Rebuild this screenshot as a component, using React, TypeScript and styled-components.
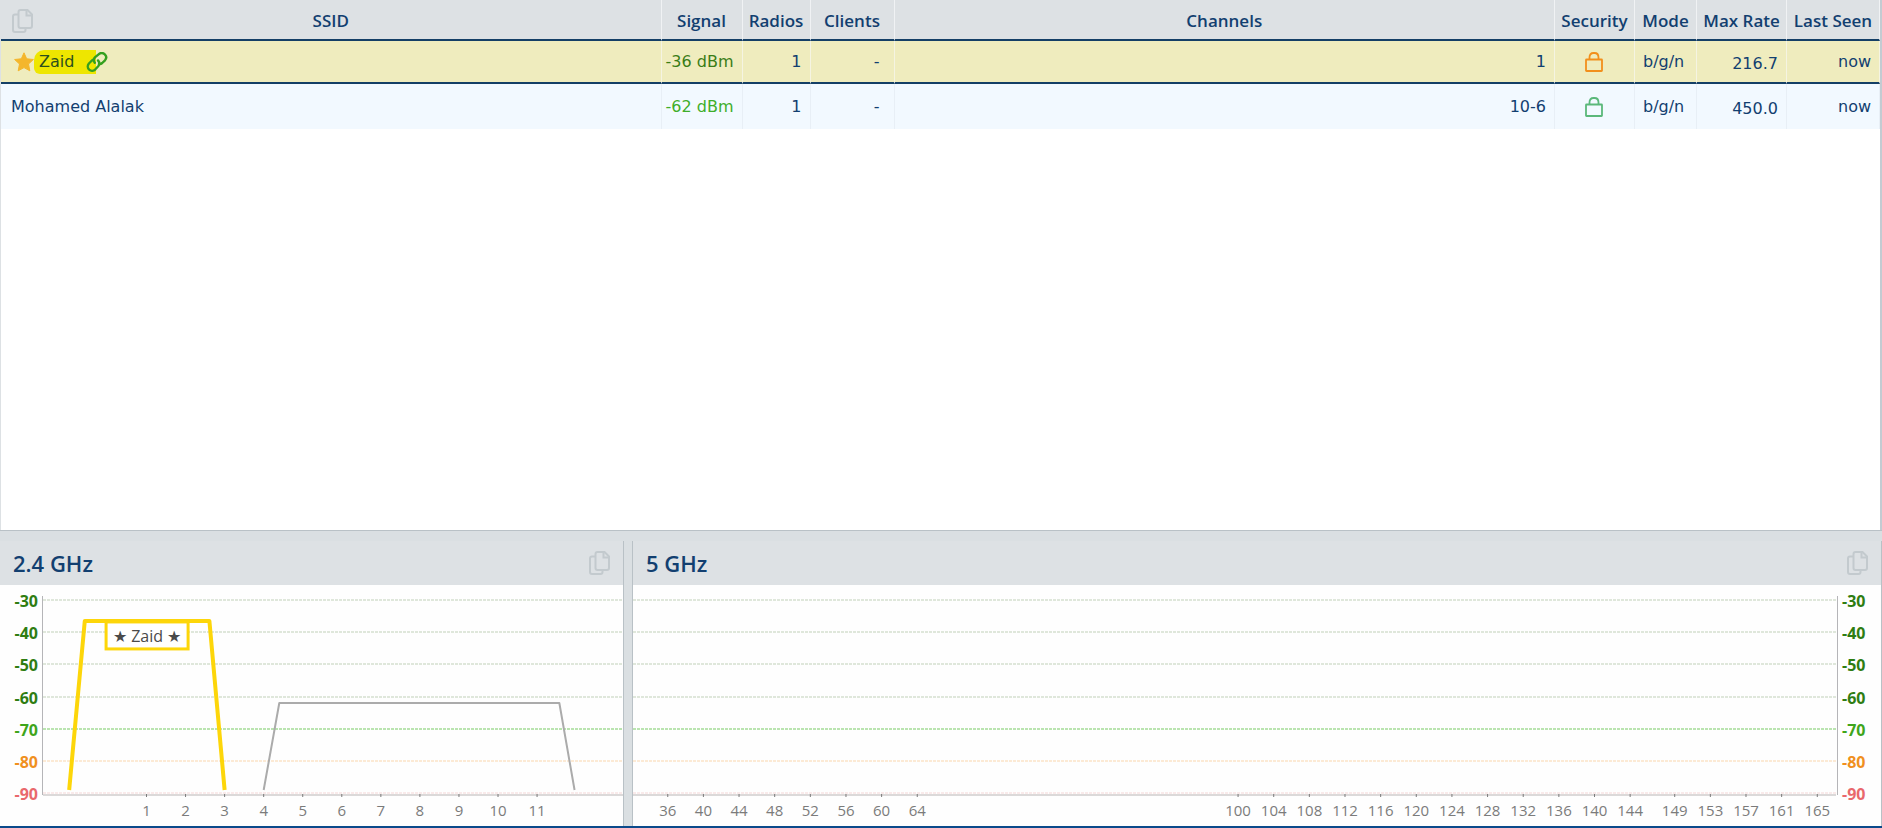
import React, { useLayoutEffect, useRef, useState } from 'react';
import styled, { createGlobalStyle } from 'styled-components';

const colors = {
  navy: '#123f70',
  bar: '#dde1e4',
  edge: '#b9c1c6',
  icon: '#c3cace',
  strong: '#2f7d12',
  good: '#3fa51b',
  fair: '#f0901e',
  weak: '#e9686c',
  axis: '#cfcccd',
  tick: '#7b7b7b',
};

const uiFont = '"Open Sans", "Noto Sans", sans-serif';
const cellFont = '"DejaVu Sans", sans-serif';

const GlobalStyle = createGlobalStyle`
  *, *::before, *::after { box-sizing: border-box; }
  body { margin: 0; background: #fff; color: ${colors.navy}; font-family: ${uiFont}; }
`;

const Page = styled.div`
  display: flex;
  flex-direction: column;
  min-height: 100vh;
  border-bottom: 2px solid #0b4a8b;
`;

const NetworkPanel = styled.section`
  flex: 1;
  border-left: 1px solid ${colors.bar};
  border-right: 2px solid #c3cbd2;
`;

const NetworkTable = styled.table`
  width: 100%;
  table-layout: fixed;
  border-collapse: separate;
  border-spacing: 0;
`;

const Col = styled.col<{ $width?: number }>`
  width: ${(p) => (p.$width ? `${p.$width}px` : 'auto')};
`;

const HeadRow = styled.tr`
  height: 41px;
  background: ${colors.bar};
`;

const HeadCell = styled.th`
  padding: 2px 0 0;
  border-right: 1px solid #f0f2f4;
  border-bottom: 2px solid #143f66;
  font-size: 17px;
  line-height: 22px;
  font-weight: 600;
  white-space: nowrap;
`;

const SsidHead = styled.div`
  display: grid;
  grid-template-columns: 32px 1fr 32px;
  align-items: center;
  & > button { justify-self: end; }
`;

const NetworkRow = styled.tr<{ $selected?: boolean }>`
  height: ${(p) => (p.$selected ? 43 : 45)}px;
  background: ${(p) => (p.$selected ? '#efecbe' : '#f2f9ff')};
  & > td {
    border-right: 1px solid ${(p) => (p.$selected ? '#f5f4e2' : '#e8eff6')};
    border-bottom: ${(p) => (p.$selected ? '2px solid #143f66' : '0')};
  }
`;

const Cell = styled.td<{ $align?: string; $tone?: string }>`
  padding: 0 8px 0 10px;
  font-family: ${cellFont};
  font-size: 16px;
  line-height: 20px;
  white-space: nowrap;
  text-align: ${(p) => p.$align ?? 'right'};
  color: ${(p) => p.$tone ?? 'inherit'};
`;

const SignalCell = styled(Cell)`
  padding: 0 4px 0 0;
`;

const ClientsCell = styled(Cell)`
  padding-right: 14px;
`;

const ModeCell = styled(Cell)`
  padding-left: 8px;
`;

const RateCell = styled(Cell)`
  padding-top: 4px;
`;

const IconCell = styled(Cell)`
  padding: 0 2px 0 0;
  & > svg { display: block; margin: 0 auto; }
`;

const Favourite = styled.div`
  display: flex;
  align-items: center;
  padding-left: 3px;
  color: #2c4f1e;
`;

const Marker = styled.span`
  display: flex;
  align-items: center;
  gap: 12px;
  height: 24px;
  padding-left: 5px;
  background: linear-gradient(#eee600, #eee600) left / 62px 100% no-repeat;
  border-radius: 10px 0 0 6px;
`;

const IconButton = styled.button`
  display: flex;
  padding: 0;
  border: 0;
  background: none;
  color: ${colors.icon};
  cursor: pointer;
`;

const HSplitter = styled.div`
  height: 11px;
  background: #dadfe2;
  border-top: 1px solid ${colors.edge};
`;

const Bands = styled.div`
  display: grid;
  grid-template-columns: 33.1% 10px minmax(0, 1fr);
`;

const VSplitter = styled.div`
  background: #dadfe2;
  border: solid ${colors.edge};
  border-width: 0 1px;
`;

const BandPanel = styled.section<{ $edge?: boolean }>`
  border-right: ${(p) => (p.$edge ? `1px solid ${colors.edge}` : '0')};
`;

const BandHeader = styled.header`
  display: flex;
  align-items: center;
  justify-content: space-between;
  height: 44px;
  padding: 0 13px;
  background: ${colors.bar};
`;

const BandTitle = styled.h2`
  margin: 0;
  font-size: 22px;
  line-height: 28px;
  font-weight: 600;
`;

const ChartSvg = styled.svg`
  display: block;
  width: 100%;
  height: 241px;
  background: #fefefe;
  font-family: ${uiFont};
`;

const LevelText = styled.text`
  font-size: 16px;
  font-weight: 700;
`;

const ChannelText = styled.text`
  font-size: 15px;
  fill: ${colors.tick};
  text-anchor: middle;
`;

const TagText = styled.text`
  font-size: 16px;
  fill: #4a4a4a;
  text-anchor: middle;
`;

const CopyIcon = () => (
  <svg width="21" height="24" viewBox="0 0 21 24" fill="none" stroke="currentColor" strokeWidth="2" aria-hidden="true">
    <path d="M6 5.500H3Q1 5.500 1 7.500V21Q1 23 3 23H11.500Q13.500 23 13.500 21V19" />
    <path d="M8.500 1H15.500L20 5.500V17Q20 19 18 19H8.500Q6.500 19 6.500 17V3Q6.500 1 8.500 1Z" />
    <path d="M14.500 1V6.500H20" />
  </svg>
);

const StarIcon = () => (
  <svg width="20" height="20" viewBox="0 0 20 20" fill="#f4b62c" stroke="#f4b62c" strokeWidth="1" strokeLinejoin="round" aria-hidden="true">
    <path d="M10 .8 12.700 6.800 19.400 7.500 14.500 12 15.800 18.800 10 15.600 4.200 18.800 5.500 12 .6 7.500 7.300 6.800Z" />
  </svg>
);

const LinkIcon = () => (
  <svg width="22" height="20" viewBox="0 0 22 20" fill="none" stroke="#34a01f" strokeWidth="2.400" strokeLinecap="round" strokeLinejoin="round" aria-hidden="true">
    <path d="M8.800 10.800C7.200 8.600 7.600 6.800 9.200 5.200L12.600 2.300C14.400.8 17 .8 18.800 2.300C20.500 4 20.500 6.500 19 8.300L16.200 11C15.200 11.900 14 12.200 13 12" />
    <path d="M12 8.400C13.900 10.600 13.700 12.600 12.200 14.300L9.400 17.300C7.600 19.100 5 19.300 3.200 17.700C1.400 16 1.300 13.400 2.900 11.500L5.400 9C6.200 8.200 7 7.900 7.600 7.800" />
  </svg>
);

const LockIcon = ({ color }: { color: string }) => (
  <svg width="18" height="20" viewBox="0 0 18 20" fill="none" stroke={color} strokeWidth="1.800" role="img" aria-label="Secured">
    <rect x="1" y="7.500" width="16" height="11.500" rx=".5" />
    <path d="M4.500 7.500V5.500Q4.500 1 8.500 1H9.500Q13.500 1 13.500 5.500V7.500" />
  </svg>
);

const CopyButton = ({ label }: { label: string }) => (
  <IconButton type="button" aria-label={label}>
    <CopyIcon />
  </IconButton>
);

const networks = [
  { ssid: 'Zaid', selected: true, signal: '-36 dBm', tone: '#3a7d16', channels: '1', lock: '#f28f1c', rate: '216.7' },
  { ssid: 'Mohamed Alalak', selected: false, signal: '-62 dBm', tone: '#3fae2a', channels: '10-6', lock: '#5bb87a', rate: '450.0' },
];

const levels = [
  { value: -30, color: colors.strong, line: '#d5dfcf' },
  { value: -40, color: colors.strong, line: '#d5dfcf' },
  { value: -50, color: colors.strong, line: '#d5dfcf' },
  { value: -60, color: colors.strong, line: '#d5dfcf' },
  { value: -70, color: colors.good, line: '#a4dc97' },
  { value: -80, color: colors.fair, line: '#fbe3c8' },
  { value: -90, color: colors.weak, line: '#f8e4e4' },
];

interface Trace {
  points: [number, number][];
  color: string;
  width: number;
  tag?: string;
}

interface BandChartProps {
  label: string;
  domain: [number, number];
  channels: number[];
  traces?: Trace[];
  axisSide: 'left' | 'right';
}

const yOf = (dbm: number) => 15 + (-30 - dbm) * 3.22;

function BandChart({ label, domain, channels, traces = [], axisSide }: BandChartProps) {
  const ref = useRef<SVGSVGElement>(null);
  const [width, setWidth] = useState(600);

  useLayoutEffect(() => {
    const node = ref.current;
    if (!node) return;
    const measure = () => setWidth(Math.round(node.getBoundingClientRect().width));
    measure();
    const observer = new ResizeObserver(measure);
    observer.observe(node);
    return () => observer.disconnect();
  }, []);

  const onLeft = axisSide === 'left';
  const start = onLeft ? 43 : 0;
  const end = onLeft ? width : width - 45;
  const axisX = onLeft ? 42 : width - 44;
  const xOf = (channel: number) => start + ((channel - domain[0]) / (domain[1] - domain[0])) * (end - start);

  return (
    <ChartSvg ref={ref} role="img" aria-label={label}>
      {levels.map((level) => {
        const y = Math.round(yOf(level.value));
        return (
          <g key={level.value}>
            <line x1={start} x2={end} y1={y} y2={y} stroke={level.line} strokeWidth="1.500" strokeDasharray="3 1" />
            <LevelText x={onLeft ? 38 : width - 39} y={y + 7} textAnchor={onLeft ? 'end' : 'start'} fill={level.color}>
              {level.value}
            </LevelText>
          </g>
        );
      })}
      <line x1={axisX + 0.5} x2={axisX + 0.5} y1="11" y2="210" stroke="#b5b5b8" />
      <line x1={start} x2={end} y1="210" y2="210" stroke={colors.axis} strokeWidth="1.500" />
      {channels.map((channel) => (
        <g key={channel}>
          <line x1={xOf(channel)} x2={xOf(channel)} y1="209" y2="212" stroke={colors.tick} />
          <ChannelText x={xOf(channel)} y="231">{channel}</ChannelText>
        </g>
      ))}
      {traces.map((trace) => {
        const middle = (xOf(trace.points[1][0]) + xOf(trace.points[2][0])) / 2;
        const top = yOf(trace.points[1][1]);
        return (
          <g key={trace.color}>
            <polyline
              points={trace.points.map(([c, d]) => `${xOf(c)},${yOf(d)}`).join(' ')}
              fill="none"
              stroke={trace.color}
              strokeWidth={trace.width}
              strokeLinejoin="round"
            />
            {trace.tag && (
              <>
                <rect x={middle - 41} y={top + 1} width="82" height="27" fill="#fff" stroke={trace.color} strokeWidth="3" />
                <TagText x={middle} y={top + 21}>★ {trace.tag} ★</TagText>
              </>
            )}
          </g>
        );
      })}
    </ChartSvg>
  );
}

const traces24: Trace[] = [
  { points: [[4, -89], [4.4, -62], [11.57, -62], [11.96, -89]], color: '#ababab', width: 2 },
  { points: [[-0.98, -89], [-0.58, -36.5], [2.61, -36.5], [3, -89]], color: '#fdd60a', width: 4, tag: 'Zaid' },
];

const channels24 = [1, 2, 3, 4, 5, 6, 7, 8, 9, 10, 11];
const channels5 = [36, 40, 44, 48, 52, 56, 60, 64, 100, 104, 108, 112, 116, 120, 124, 128, 132, 136, 140, 144, 149, 153, 157, 161, 165];

export default function App() {
  return (
    <>
      <GlobalStyle />
      <Page>
        <NetworkPanel>
          <NetworkTable>
            <colgroup>
              <Col />
              <Col $width={81} />
              <Col $width={68} />
              <Col $width={84} />
              <Col />
              <Col $width={80} />
              <Col $width={62} />
              <Col $width={90} />
              <Col $width={93} />
            </colgroup>
            <thead>
              <HeadRow>
                <HeadCell scope="col">
                  <SsidHead>
                    <CopyButton label="Copy network list" />
                    <span>SSID</span>
                  </SsidHead>
                </HeadCell>
                {['Signal', 'Radios', 'Clients', 'Channels', 'Security', 'Mode', 'Max Rate', 'Last Seen'].map((name) => (
                  <HeadCell key={name} scope="col">{name}</HeadCell>
                ))}
              </HeadRow>
            </thead>
            <tbody>
              {networks.map((n) => (
                <NetworkRow key={n.ssid} $selected={n.selected}>
                  <Cell $align="left">
                    {n.selected ? (
                      <Favourite>
                        <StarIcon />
                        <Marker>
                          {n.ssid}
                          <LinkIcon />
                        </Marker>
                      </Favourite>
                    ) : (
                      n.ssid
                    )}
                  </Cell>
                  <SignalCell $align="center" $tone={n.tone}>{n.signal}</SignalCell>
                  <Cell>1</Cell>
                  <ClientsCell>-</ClientsCell>
                  <Cell>{n.channels}</Cell>
                  <IconCell><LockIcon color={n.lock} /></IconCell>
                  <ModeCell $align="left">b/g/n</ModeCell>
                  <RateCell>{n.rate}</RateCell>
                  <Cell>now</Cell>
                </NetworkRow>
              ))}
            </tbody>
          </NetworkTable>
        </NetworkPanel>
        <HSplitter />
        <Bands>
          <BandPanel>
            <BandHeader>
              <BandTitle>2.4 GHz</BandTitle>
              <CopyButton label="Copy 2.4 GHz chart" />
            </BandHeader>
            <BandChart label="2.4 GHz channels" domain={[-1.65, 13.2]} channels={channels24} traces={traces24} axisSide="left" />
          </BandPanel>
          <VSplitter />
          <BandPanel $edge>
            <BandHeader>
              <BandTitle>5 GHz</BandTitle>
              <CopyButton label="Copy 5 GHz chart" />
            </BandHeader>
            <BandChart label="5 GHz channels" domain={[32.1, 167.1]} channels={channels5} axisSide="right" />
          </BandPanel>
        </Bands>
      </Page>
    </>
  );
}
